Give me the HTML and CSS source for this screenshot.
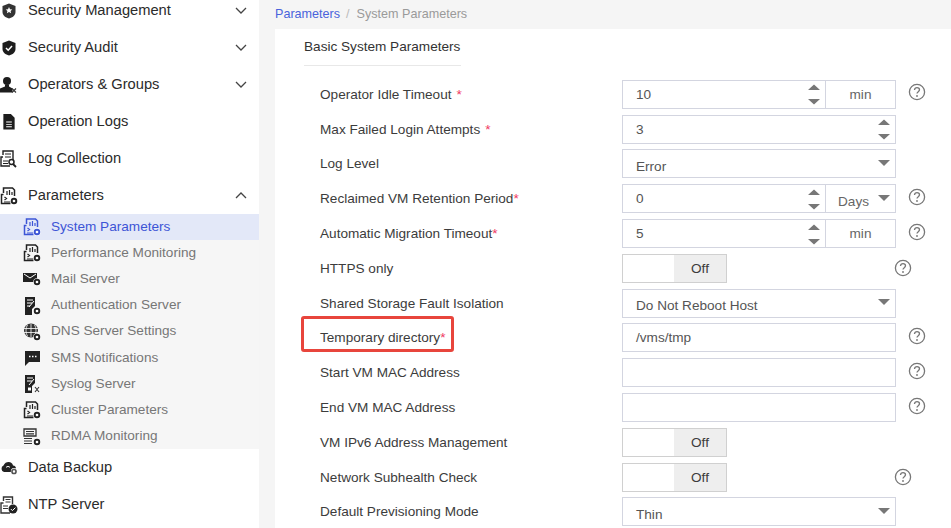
FILE: index.html
```html
<!DOCTYPE html>
<html lang="en">
<head>
<meta charset="utf-8">
<title>System Parameters</title>
<link rel="stylesheet" href="styles.css">
</head>
<body>
<svg class="defs" width="0" height="0">
  <symbol id="gear" viewBox="0 0 8 8"><circle cx="4" cy="4" r="3.8" fill="#fff"/><circle cx="4" cy="4" r="2.3" fill="none" stroke-width="1.9" stroke="currentColor"/></symbol>
  <symbol id="doc" viewBox="0 0 18 18"><path d="M3.500 6V1h9l2 2v6M3.500 7.500H1.500v9h9" fill="none" stroke="currentColor" stroke-width="1.500"/><path d="M7 4v4M9.500 3v5M12 5v3M4.500 10l2 1.500-2 1.500M4 15h7" fill="none" stroke="currentColor" stroke-width="1.200"/><use href="#gear" x="10" y="10" width="8" height="8"/></symbol>
  <symbol id="help" viewBox="0 0 18 18"><circle cx="9" cy="9" r="7.600" fill="none" stroke="#777" stroke-width="1.300"/><path d="M6.500 7c0-1.600 1.100-2.400 2.500-2.400s2.500.9 2.500 2.200c0 1.800-2.500 1.900-2.500 3.800" fill="none" stroke="#777" stroke-width="1.300"/><circle cx="9" cy="13" r=".9" fill="#777"/></symbol>
  <symbol id="spin" viewBox="0 0 12 24"><path d="M6 2.500 12 8H0zM0 17h12l-6 5.500z" fill="#777"/></symbol>
  <symbol id="caret" viewBox="0 0 12 6"><path d="M0 0h12L6 6z" fill="#777"/></symbol>
</svg>
<div class="page">
  <nav class="sidebar">
    <div class="item"><svg class="ico" viewBox="0 0 14 16"><path d="M7 .5 13.500 3v6c0 3.500-3 5.500-6.500 6.500C3.500 14.500.5 12.500.5 9V3z" fill="#333"/><path d="m7 4 1 2.200 2.300.2-1.700 1.600.5 2.300L7 9.100l-2.100 1.200.5-2.300-1.700-1.600L6 6.200z" fill="#fff"/></svg><span class="name">Security Management</span><svg class="chev" viewBox="0 0 12 7"><path d="m1 1 5 5 5-5"/></svg></div>
    <div class="item"><svg class="ico" viewBox="0 0 14 16"><path d="M7 .5 13.500 3v6c0 3.500-3 5.500-6.500 6.500C3.500 14.500.5 12.500.5 9V3z" fill="#1d1d1d"/><path d="m4 8 2.200 2.200L10 6" fill="none" stroke="#fff" stroke-width="1.500"/></svg><span class="name">Security Audit</span><svg class="chev" viewBox="0 0 12 7"><path d="m1 1 5 5 5-5"/></svg></div>
    <div class="item"><svg class="ico wide" viewBox="0 0 18 17"><circle cx="7" cy="4.500" r="4" fill="#1d1d1d"/><path d="M5 8h4v2l3.500 2v4H0v-4l5-2z" fill="#1d1d1d"/><path d="m12 12 4 4m0-4-4 4" stroke="#333" stroke-width="1.100"/></svg><span class="name">Operators &amp; Groups</span><svg class="chev" viewBox="0 0 12 7"><path d="m1 1 5 5 5-5"/></svg></div>
    <div class="item"><svg class="ico" viewBox="0 0 14 17"><path d="M1 0h8l4 4v12.500H1z" fill="#1d1d1d"/><path d="M4 8h6v1H4zm0 2.500h6v1H4zM4 13h6v1H4z" fill="#fff"/></svg><span class="name">Operation Logs</span></div>
    <div class="item"><svg class="ico wide" viewBox="0 0 18 18"><path d="M3 5V1h10v9M3 7H1v9h9" fill="none" stroke="#222" stroke-width="1.400"/><path d="M5 4h6M5 7h6M3 11h5M3 13.500h5" stroke="#222"/><circle cx="11.500" cy="12" r="2.500" fill="none" stroke="#222" stroke-width="1.500"/><path d="m13 14 3 3" stroke="#222" stroke-width="1.800"/></svg><span class="name">Log Collection</span></div>
    <div class="item"><svg class="ico wide" viewBox="0 0 18 18"><use href="#doc"/></svg><span class="name">Parameters</span><svg class="chev" viewBox="0 0 12 7"><path d="m1 6 5-5 5 5"/></svg></div>
    <div class="sub">
      <div class="subitem active"><svg class="sico" viewBox="0 0 18 18"><use href="#doc"/></svg><span>System Parameters</span></div>
      <div class="subitem"><svg class="sico" viewBox="0 0 18 18"><use href="#doc"/></svg><span>Performance Monitoring</span></div>
      <div class="subitem"><svg class="sico" viewBox="0 0 18 18"><path d="M0 3h14v9H0z" fill="#222"/><path d="m1 4 6 4 6-4" fill="none" stroke="#fff"/><use href="#gear" x="10" y="8" width="8" height="8"/></svg><span>Mail Server</span></div>
      <div class="subitem"><svg class="sico" viewBox="0 0 18 18"><path d="M2 0h10v9l-3 3v6H2z" fill="#222"/><path d="M4 3h6M4 6h5M4 9h3M11 4l-5 6" stroke="#fff"/><use href="#gear" x="10" y="10" width="8" height="8"/></svg><span>Authentication Server</span></div>
      <div class="subitem"><svg class="sico" viewBox="0 0 18 18"><circle cx="8" cy="7.500" r="7" fill="#333"/><path d="M1 5.500h14M1 9.500h14M8 1v13M4.500 2c-2 3-2 8 0 11m7-11c2 3 2 8 0 11" fill="none" stroke="#fff" stroke-width=".8"/><use href="#gear" x="10" y="10" width="8" height="8"/></svg><span>DNS Server Settings</span></div>
      <div class="subitem"><svg class="sico" viewBox="0 0 18 18"><path d="M2 2h15v11H6l-4 4z" fill="#222"/><path d="M6 7.500h1.500M9 7.500h1.500M12 7.500h1.500" stroke="#fff" stroke-width="1.500"/></svg><span>SMS Notifications</span></div>
      <div class="subitem"><svg class="sico" viewBox="0 0 18 18"><path d="M2 0h10v8l-3 3v7H2z" fill="#222"/><path d="M4 3h6M4 6h5M11 4l-5 6" stroke="#fff"/><path d="M5 12.500h3v3H5z" fill="#fff"/><path d="m12 12 4 5m0-5-4 5" stroke="#333" stroke-width="1.100"/></svg><span>Syslog Server</span></div>
      <div class="subitem"><svg class="sico" viewBox="0 0 18 18"><use href="#doc"/></svg><span>Cluster Parameters</span></div>
      <div class="subitem"><svg class="sico" viewBox="0 0 18 18"><path d="M1 1h12v7H1z" fill="none" stroke="#333" stroke-width="1.300"/><path d="M3 3.500h8M3 5.800h8M1 10.500h8M1 13h8M1 15.500h8" fill="none" stroke="#333" stroke-width="1.200"/><use href="#gear" x="10" y="10" width="8" height="8"/></svg><span>RDMA Monitoring</span></div>
    </div>
    <div class="item"><svg class="ico wide" viewBox="0 0 18 14"><path d="M4 11a3.500 3.500 0 0 1-.5-6.500C4.500 2 6.500 1 8.500 1c2.500 0 4 1.500 4.500 3.500 2 .2 3 1.500 3 3H12v3.500z" fill="#222"/><path d="M6 6.500a2.500 2.500 0 0 1 4 0" fill="none" stroke="#fff"/><use href="#gear" x="10.500" y="7" width="7" height="7" color="#555"/></svg><span class="name">Data Backup</span></div>
    <div class="item"><svg class="ico wide" viewBox="0 0 18 18"><path d="M3.500 5V1h9v7M3.500 7H1v10h9" fill="none" stroke="#333" stroke-width="1.400"/><path d="M5.500 3.500h5M5.500 6h5M3 10h5M3 12.500h5" stroke="#333"/><circle cx="13" cy="13" r="4.500" fill="#222"/><path d="m10.800 13 1.600 1.600 3-3" fill="none" stroke="#fff"/></svg><span class="name">NTP Server</span></div>
  </nav>
  <main class="main">
    <div class="crumbs"><a class="crumb-link">Parameters</a><span class="crumb-sep">/</span><span>System Parameters</span></div>
    <section class="panel">
      <h2 class="title">Basic System Parameters</h2>
      <div class="form">
        <div class="lbl">Operator Idle Timeout<i class="req space">*</i></div>
        <div class="ctl"><div class="box"><span class="val">10</span><svg class="spin"><use href="#spin"/></svg></div><div class="unit">min</div></div>
        <svg class="help"><use href="#help"/></svg>

        <div class="lbl">Max Failed Login Attempts<i class="req space">*</i></div>
        <div class="ctl"><div class="box"><span class="val">3</span><svg class="spin"><use href="#spin"/></svg></div></div>
        <span></span>

        <div class="lbl">Log Level</div>
        <div class="ctl"><div class="box sel"><span class="val">Error</span><svg class="caret"><use href="#caret"/></svg></div></div>
        <span></span>

        <div class="lbl">Reclaimed VM Retention Period<i class="req">*</i></div>
        <div class="ctl"><div class="box"><span class="val">0</span><svg class="spin"><use href="#spin"/></svg></div><div class="unit sel"><span class="val">Days</span><svg class="caret"><use href="#caret"/></svg></div></div>
        <svg class="help"><use href="#help"/></svg>

        <div class="lbl">Automatic Migration Timeout<i class="req">*</i></div>
        <div class="ctl"><div class="box"><span class="val">5</span><svg class="spin"><use href="#spin"/></svg></div><div class="unit">min</div></div>
        <svg class="help"><use href="#help"/></svg>

        <div class="lbl">HTTPS only</div>
        <div class="ctl"><div class="switch"><span class="track"></span><span class="off">Off</span></div></div>
        <svg class="help near"><use href="#help"/></svg>

        <div class="lbl">Shared Storage Fault Isolation</div>
        <div class="ctl"><div class="box sel"><span class="val">Do Not Reboot Host</span><svg class="caret"><use href="#caret"/></svg></div></div>
        <span></span>

        <div class="lbl">Temporary directory<i class="req">*</i><span class="mark"></span></div>
        <div class="ctl"><div class="box"><span class="val">/vms/tmp</span></div></div>
        <svg class="help"><use href="#help"/></svg>

        <div class="lbl">Start VM MAC Address</div>
        <div class="ctl"><div class="box"></div></div>
        <svg class="help"><use href="#help"/></svg>

        <div class="lbl">End VM MAC Address</div>
        <div class="ctl"><div class="box"></div></div>
        <svg class="help"><use href="#help"/></svg>

        <div class="lbl">VM IPv6 Address Management</div>
        <div class="ctl"><div class="switch"><span class="track"></span><span class="off">Off</span></div></div>
        <span></span>

        <div class="lbl">Network Subhealth Check</div>
        <div class="ctl"><div class="switch"><span class="track"></span><span class="off">Off</span></div></div>
        <svg class="help near"><use href="#help"/></svg>

        <div class="lbl">Default Previsioning Mode</div>
        <div class="ctl"><div class="box sel"><span class="val">Thin</span><svg class="caret"><use href="#caret"/></svg></div></div>
        <span></span>
      </div>
    </section>
  </main>
</div>
</body>
</html>
```

FILE: styles.css
```css
* { box-sizing: border-box; }
html, body { margin: 0; height: 100%; overflow: hidden; background: #f5f5f5; }
body { font-family: "Liberation Sans", Arial, sans-serif; color: #333; }
.defs { position: absolute; }
.page { display: flex; height: 528px; overflow: hidden; }

.sidebar { width: 259px; flex: none; background: #fff; margin-top: -8px; height: 560px; }
.item { display: flex; align-items: center; height: 37px; font-size: 14.7px; padding-right: 12px; color: #2b2b2b; }
.ico { width: 14px; height: 16px; margin: 0 12px 0 2px; flex: none; }
.ico.wide { width: 18px; height: 18px; margin: 0 10px 0 0; color: #222; }
.name { flex: 1; margin-bottom: 2px; }
.chev { width: 12px; height: 7px; fill: none; stroke: #444; stroke-width: 1.3; flex: none; }
.sub { background: #f6f6f6; height: 235px; }
.subitem { display: flex; align-items: center; height: 26.2px; padding-left: 23px; font-size: 13.6px; color: #777; }
.subitem span { margin-bottom: 2px; }
.subitem.active { background: #e3e8f8; color: #3d55d6; }
.sico { width: 18px; height: 18px; margin-right: 10px; flex: none; color: #222; }
.active .sico { color: #3d55d6; }

.main { flex: 1; min-width: 0; padding-left: 16px; }
.crumbs { height: 29px; padding-bottom: 2px; display: flex; align-items: center; font-size: 12.6px; color: #9a9a9a; }
.crumb-link { color: #4a63dc; }
.crumb-sep { margin: 0 7px 0 6px; color: #bbb; }
.panel { background: #fff; height: 499px; padding-left: 29px; }
.title { display: inline-block; margin: 0; padding-top: 10px; height: 37px; width: 157px; font-size: 13.6px; font-weight: 400; line-height: 16px; white-space: nowrap; color: #333; border-bottom: 1px solid #e8e8e8; }
.form { display: grid; grid-template-columns: 318px 274px 55px; grid-auto-rows: 34.8px; align-items: center; margin-top: 11px; }
.lbl { padding-left: 16px; font-size: 13.6px; color: #3c3c3c; position: relative; white-space: nowrap; }
.req { font-style: normal; color: #f03a5f; }
.req.space { margin-left: 5px; }
.mark { position: absolute; left: -3px; top: -14px; width: 153px; height: 36px; border: 3px solid #e8453c; border-radius: 3px; }
.ctl { display: flex; height: 29px; }
.box { flex: 1; display: flex; align-items: center; justify-content: space-between; border: 1px solid #d3d5e0; padding: 0 5px 0 13px; font-size: 13.6px; color: #555; background: #fff; }
.sel .val { padding-top: 5px; }
.unit { width: 71px; display: flex; align-items: center; justify-content: center; margin-left: -1px; border: 1px solid #d3d5e0; font-size: 13.6px; color: #666; }
.unit.sel { justify-content: space-between; padding: 0 5px 0 12px; }
.spin { width: 12px; height: 24px; flex: none; }
.caret { width: 12px; height: 6px; flex: none; margin-bottom: 2px; }
.switch { display: flex; width: 105px; border: 1px solid #d0d0d0; font-size: 13.6px; color: #3c3c3c; }
.track { flex: 1; }
.off { width: 52px; background: #eeeeee; display: flex; align-items: center; justify-content: center; }
.help { width: 18px; height: 18px; margin-left: 12px; margin-top: -4px; }
.help.near { margin-left: -2px; margin-top: 0; }
```
